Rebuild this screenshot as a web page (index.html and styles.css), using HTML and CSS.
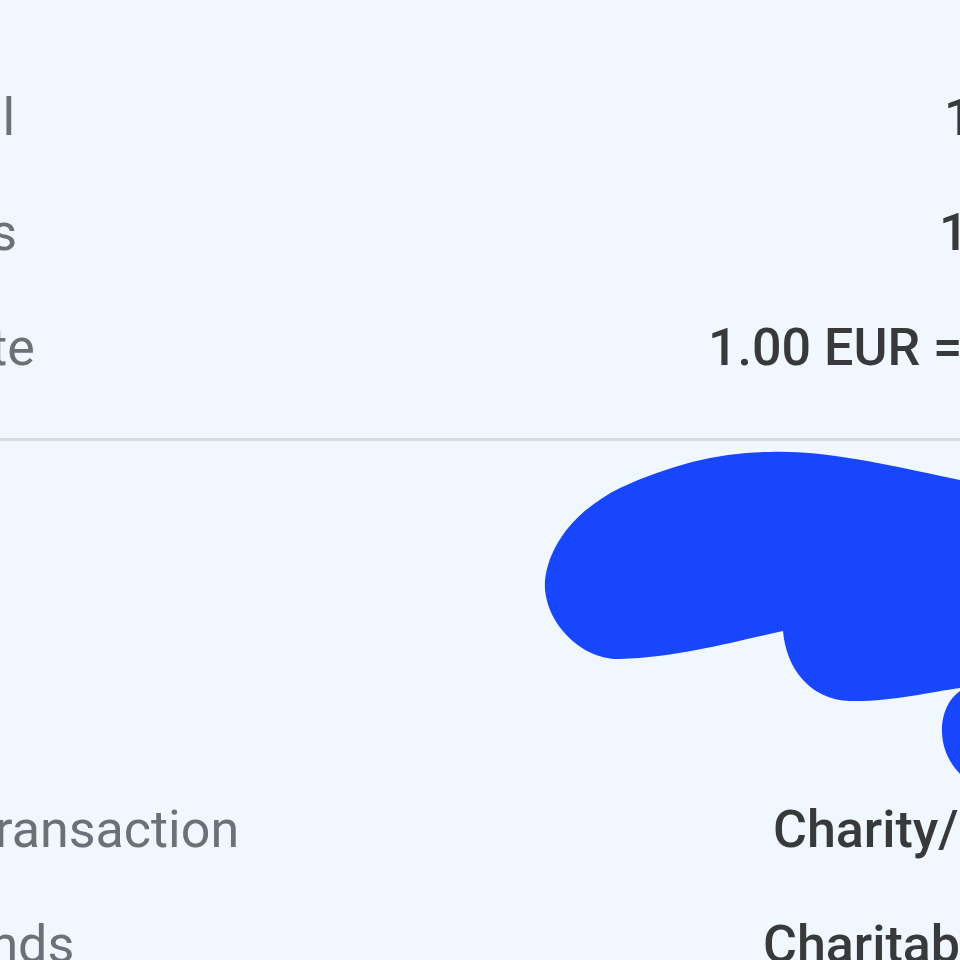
FILE: index.html
```html
<!DOCTYPE html>
<html lang="en">
<head>
<meta charset="utf-8">
<title>Transaction details</title>
<link rel="stylesheet" href="styles.css">
</head>
<body>
<main class="details">
  <section class="group group--top">
    <div class="row row--total">
      <span class="label">Total</span>
      <span class="value">100.00 EUR</span>
    </div>
    <div class="row row--fees">
      <span class="label">Fees</span>
      <span class="value">1.00 EUR</span>
    </div>
    <div class="row row--rate">
      <span class="label">Exchange rate</span>
      <span class="value">1.00 EUR = 1.08 USD</span>
    </div>
  </section>

  <hr class="divider">

  <section class="redacted" aria-label="Redacted">
    <svg class="scribble" viewBox="0 0 960 331" width="960" height="331" aria-hidden="true">
      <path d="M 960 39 C 900 27, 830 9, 770 11 C 720 11, 670 24, 620 47 C 580 67, 550 99, 545 139 C 542 179, 580 219, 620 218 C 680 216, 740 199, 783 190 C 786 227, 810 259, 850 260 C 890 261, 930 251, 960 247 Z"/>
      <path d="M 960 250 C 948 258, 941 275, 942 292 C 943 310, 950 322, 960 333 Z"/>
    </svg>
  </section>

  <section class="group group--bottom">
    <div class="row row--type">
      <span class="label">Type of transaction</span>
      <span class="value">Charity/Donation</span>
    </div>
    <div class="row row--source">
      <span class="label">Source of funds</span>
      <span class="value">Charitable donations</span>
    </div>
  </section>
</main>
</body>
</html>
```

FILE: styles.css
```css
* {
  box-sizing: border-box;
}

html, body {
  margin: 0;
  padding: 0;
  background: #f1f7fe;
  overflow: hidden;
}

body {
  width: 960px;
  height: 960px;
  font-family: Roboto, "Noto Sans", "Liberation Sans", sans-serif;
}

.details {
  display: flex;
  flex-direction: column;
}

.group--top {
  padding-top: 60px;
}

.row {
  display: grid;
  grid-template-columns: 0px auto;
  height: 115px;
  font-size: 52px;
  line-height: 115px;
  white-space: nowrap;
}

.label {
  color: #6d7075;
  font-weight: 400;
}

.value {
  color: #38393b;
  font-weight: 500;
}

.row--total .label { margin-left: -101px; }
.row--total .value { margin-left: 944px; }

.row--fees .label { margin-left: -93px; }
.row--fees .value { margin-left: 939px; }

.row--rate .label { margin-left: -292px; }
.row--rate .value { margin-left: 708px; }

.row--type .label { margin-left: -206px; }
.row--type .value { margin-left: 773px; }

.row--source .label { margin-left: -292px; }
.row--source .value { margin-left: 763px; }

.divider {
  margin: 33px 0 0;
  height: 3px;
  border: 0;
  background: #d6dce3;
}

.redacted {
  position: relative;
  height: 331px;
}

.scribble {
  position: absolute;
  left: 0;
  top: 0;
  overflow: visible;
  fill: #1846fd;
}
```
